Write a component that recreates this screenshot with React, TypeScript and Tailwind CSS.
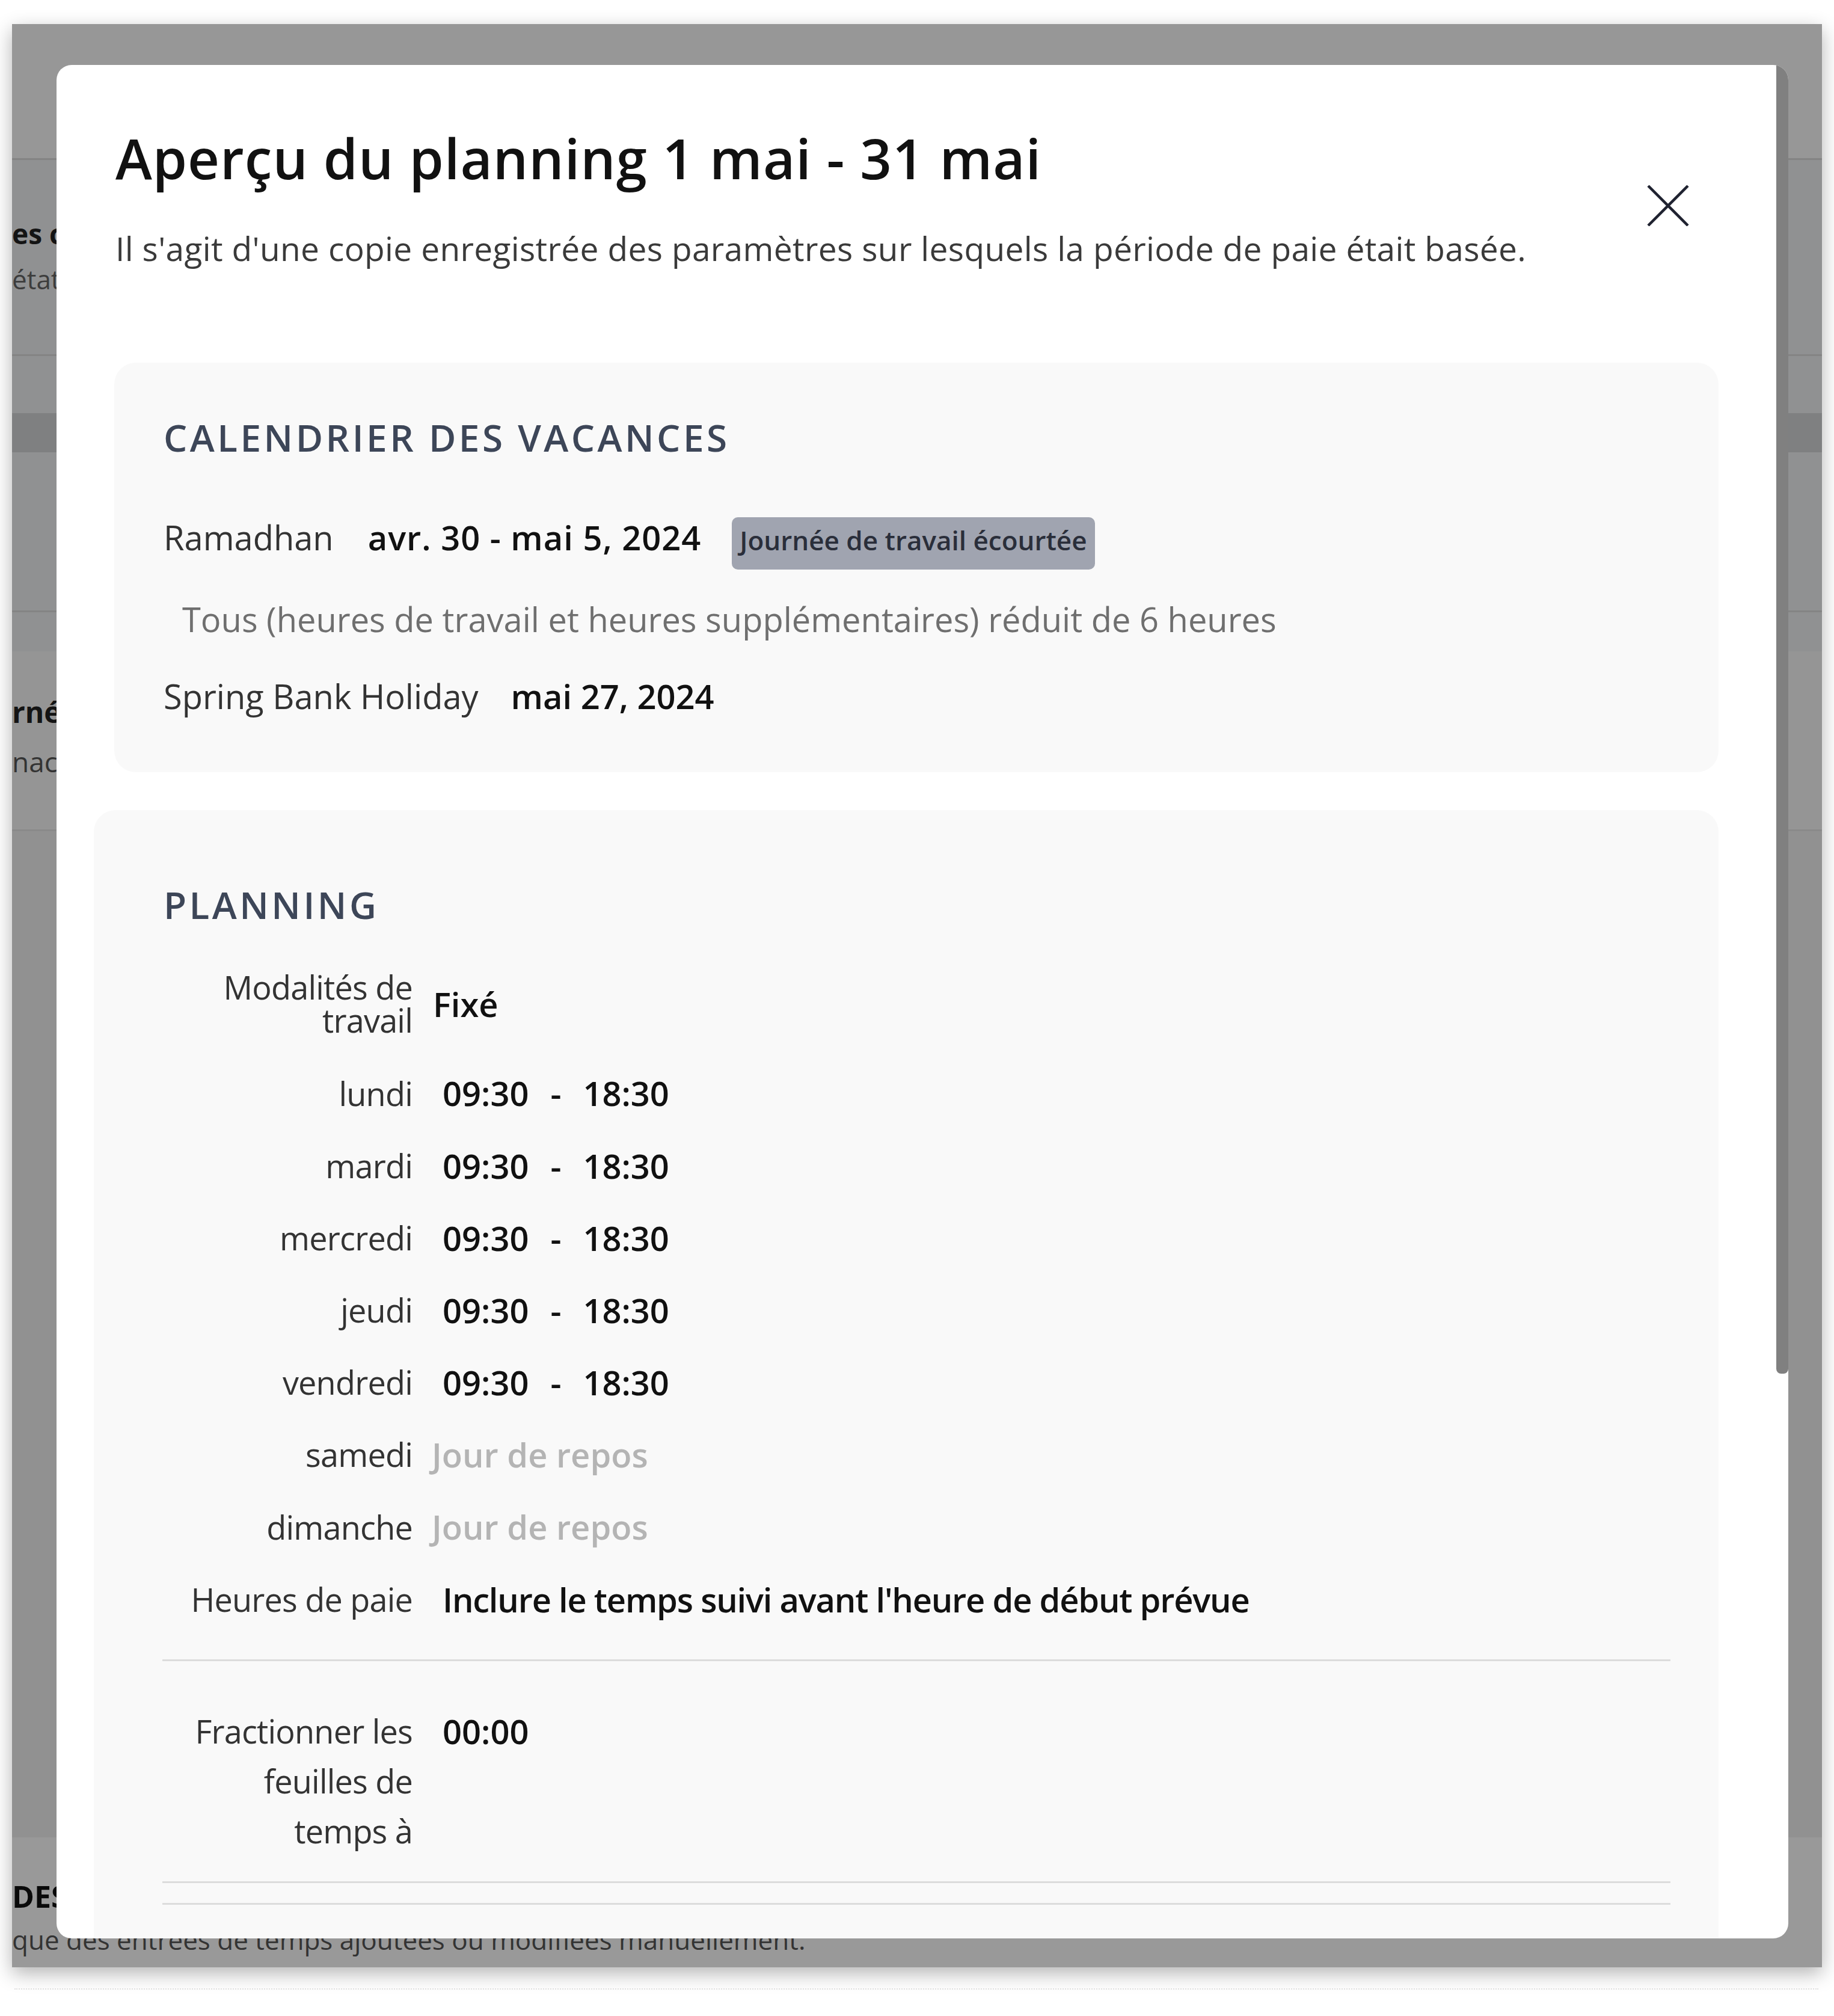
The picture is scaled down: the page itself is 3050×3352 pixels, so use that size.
import React from "react";

const days = [
  { label: "lundi", start: "09:30", end: "18:30" },
  { label: "mardi", start: "09:30", end: "18:30" },
  { label: "mercredi", start: "09:30", end: "18:30" },
  { label: "jeudi", start: "09:30", end: "18:30" },
  { label: "vendredi", start: "09:30", end: "18:30" },
];

const restDays = ["samedi", "dimanche"];

const labelCls = "w-[414px] shrink-0 text-right text-[54px] tracking-[-0.8px] text-[#333]";

// the page that sits under the dark overlay
const BackgroundPage = () => (
  <div className="flex flex-col w-full">
    <div className="h-[223px] bg-[#fcfcfc]" />
    <div className="h-[326px] border-t-[3px] border-[#dcdcdc] bg-[#f1f2f4] pt-[95px]">
      <div className="text-[46px] leading-[1.2] font-bold text-[#222]">es conditions</div>
      <div className="mt-[22px] text-[44px] leading-[1.2] text-[#666]">état</div>
    </div>
    <div className="h-[98px] border-t-[3px] border-[#dcdcdc] bg-[#f1f2f4]" />
    <div className="h-[65px] bg-[#d4d5d8]" />
    <div className="h-[263px] bg-[#f1f2f4]" />
    <div className="h-[68px] border-t-[3px] border-[#dcdcdc] bg-[#f1f2f4]" />
    <div className="h-[296px] bg-[#f8f8f8] pt-[72px]">
      <div className="text-[48px] leading-[1.2] font-bold text-[#222]">rnée</div>
      <div className="mt-[26px] text-[46px] leading-[1.2] text-[#555]">nace</div>
    </div>
    <div className="h-[1676px] border-t-[3px] border-[#e6e6e6] bg-[#f2f2f2]" />
    <div className="h-[215px] bg-white pt-[68px]">
      <div className="text-[50px] leading-[1.2] font-bold text-[#111]">DES</div>
      <div className="mt-[16px] text-[44px] leading-[1.2] text-[#555]">
        que des entrées de temps ajoutées ou modifiées manuellement.
      </div>
    </div>
  </div>
);

export default function App() {
  return (
    <div className="w-[3050px] min-h-[3352px] bg-white pl-[20px] pt-[40px] font-['Open_Sans',sans-serif]">
      <div className="relative w-[3010px] h-[3231px] overflow-hidden shadow-[0_10px_30px_rgba(0,0,0,0.3)]">
        <BackgroundPage />

        {/* overlay */}
        <div className="absolute inset-0 bg-black/40" />

        {/* modal */}
        <div className="absolute left-[74px] top-[68px] w-[2880px] h-[3115px] overflow-hidden rounded-[25px] bg-white">
          {/* scrollbar thumb */}
          <div className="absolute right-0 top-0 w-[20px] h-[2176px] rounded-b-[8px] bg-[#808080]" />

          <div className="flex items-start justify-between pl-[98px] pr-[165px] pt-[100px]">
            <div>
              <h1 className="text-[92px] leading-[1.2] tracking-[1px] font-semibold text-[#111]">
                Aperçu du planning 1 mai - 31 mai
              </h1>
              <p className="mt-[62px] text-[55px] leading-[1.2] tracking-[0.35px] text-[#3a3a3a]">
                Il s'agit d'une copie enregistrée des paramètres sur lesquels la période de paie était basée.
              </p>
            </div>
            <button className="mt-[100px] w-[70px] h-[68px]" aria-label="Fermer">
              <svg viewBox="0 0 70 68" className="w-[70px] h-[68px]">
                <path d="M2 1 L68 67 M68 1 L2 67" stroke="#1f2230" strokeWidth="4.5" fill="none" />
              </svg>
            </button>
          </div>

          <div className="pl-[96px] pr-[116px]">
            {/* calendrier des vacances */}
            <div className="mt-[157px] rounded-[36px] bg-[#f9f9f9] pl-[82px] pt-[87px] pb-[93px]">
              <h2 className="text-[62px] leading-[1.2] tracking-[4.5px] font-semibold text-[#3d4658]">
                CALENDRIER DES VACANCES
              </h2>
              <div className="mt-[95px] flex items-baseline text-[56px] leading-[1.2]">
                <span className="text-[#333]">Ramadhan</span>
                <span className="ml-[57px] tracking-[1px] font-semibold text-[#111]">avr. 30 - mai 5, 2024</span>
                <span className="ml-[51px] rounded-[10px] bg-[#a0a4b0] px-[13px] pt-[12px] pb-[22px] text-[44px] leading-[1.2] font-semibold text-[#2a2e3a]">
                  Journée de travail écourtée
                </span>
              </div>
              <div className="mt-[49px] pl-[31px] text-[56px] leading-[1.2] text-[#6f6f6f]">
                Tous (heures de travail et heures supplémentaires) réduit de 6 heures
              </div>
              <div className="mt-[61px] flex items-baseline text-[56px] leading-[1.2]">
                <span className="text-[#333]">Spring Bank Holiday</span>
                <span className="ml-[54px] font-semibold text-[#111]">mai 27, 2024</span>
              </div>
            </div>

            {/* planning */}
            <div className="mt-[63px] ml-[-34px] rounded-[36px] bg-[#f9f9f9] pl-[116px] pr-[80px] pt-[120px] pb-[200px]">
              <h2 className="text-[62px] leading-[1.2] tracking-[4.5px] font-semibold text-[#3d4658]">PLANNING</h2>

              <div className="mt-[73px] flex items-center text-[56px]">
                <div className={`${labelCls} leading-[55px]`}>
                  Modalités de
                  <br />
                  travail
                </div>
                <div className="ml-[34px] leading-[1.2] font-semibold text-[#111]">Fixé</div>
              </div>

              {days.map((d, i) => (
                <div
                  key={d.label}
                  className={`flex items-center text-[56px] leading-[1.2] ${i === 0 ? "mt-[60px]" : "mt-[53px]"}`}
                >
                  <div className={labelCls}>{d.label}</div>
                  <div className="ml-[50px] flex items-center gap-[36px] font-semibold text-[#111]">
                    <span>{d.start}</span>
                    <span>-</span>
                    <span>{d.end}</span>
                  </div>
                </div>
              ))}

              {restDays.map((d) => (
                <div key={d} className="mt-[53px] flex items-center text-[56px] leading-[1.2]">
                  <div className={labelCls}>{d}</div>
                  <div className="ml-[32px] font-semibold text-[#b4b4b4]">Jour de repos</div>
                </div>
              ))}

              <div className="mt-[53px] flex items-center text-[56px] leading-[1.2]">
                <div className={labelCls}>Heures de paie</div>
                <div className="ml-[50px] tracking-[-1.2px] font-semibold text-[#111]">
                  Inclure le temps suivi avant l'heure de début prévue
                </div>
              </div>

              <div className="mt-[66px] ml-[-2px] h-[3px] bg-[#dcdcdc]" />

              <div className="mt-[75px] flex items-start text-[56px] leading-[83px]">
                <div className={labelCls}>
                  Fractionner les
                  <br />
                  feuilles de
                  <br />
                  temps à
                </div>
                <div className="ml-[50px] font-semibold text-[#111]">00:00</div>
              </div>

              <div className="mt-[42px] ml-[-2px] h-[3px] bg-[#dcdcdc]" />
              <div className="mt-[33px] ml-[-2px] h-[3px] bg-[#dcdcdc]" />
            </div>
          </div>
        </div>
      </div>
      <div className="mt-[35px] ml-[4px] w-[3000px] border-t-[2px] border-dotted border-[#e2e2e2]" />
    </div>
  );
}
